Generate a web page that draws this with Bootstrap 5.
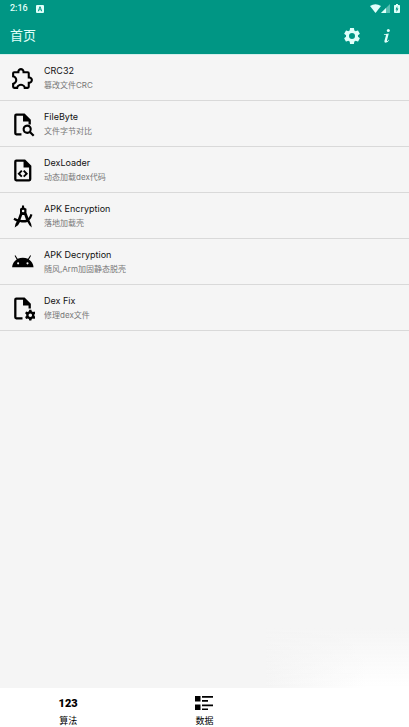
<!DOCTYPE html>
<html lang="zh-CN">
<head>
<meta charset="utf-8">
<meta name="viewport" content="width=device-width, initial-scale=1">
<title>首页</title>
<link href="https://cdn.jsdelivr.net/npm/bootstrap@5.3.0/dist/css/bootstrap.min.css" rel="stylesheet">
<style>
body { font-family: Roboto, "Noto Sans CJK SC", sans-serif; background: #f5f5f5; }
svg { display: block; fill: currentColor; flex: none; }
.app-top { background: #009684; color: #e0fffa; }
.status-line { height: 17px; font-size: 9px; line-height: 17px; font-weight: 500; padding: 0 9px 0 10px; }
.app-head { height: 38px; padding: 0 10px; border-bottom: 1px solid #d5efec; }
.app-head h1 { font-size: 13px; line-height: 20px; font-weight: 400; }
.head-actions { gap: 11px; }
.icon-btn { width: 24px; height: 24px; color: inherit; border: 0; background: none; }
.tool-row { height: 46px; padding: 1px 10px 0; gap: 9px; background: #f5f5f5; color: #000; border: 0; border-bottom: 1px solid #d9d9d9; font-family: Inter, "Noto Sans CJK SC", sans-serif; }
.tool-title { font-size: 9px; line-height: 15px; color: #111; }
.tool-note { font-size: 8px; line-height: 15px; color: #777; }
.tab-bar { position: relative; background: #fff; height: 39px; }
.tab-link { color: #000; font-size: 9px; line-height: 13px; padding-top: 7px; }
.tab-digits { font-size: 11px; line-height: 14px; padding-top: 2px; font-weight: 900; }
.corner-glow { position: absolute; right: 0; bottom: 100%; width: 35%; height: 60px; pointer-events: none;
  background: linear-gradient(to bottom, #f5f5f5, transparent), linear-gradient(to right, #f5f5f5, #fff 70%); }
</style>
<script src="https://cdn.jsdelivr.net/npm/bootstrap@5.3.0/dist/js/bootstrap.bundle.min.js"></script>
</head>
<body class="d-flex flex-column min-vh-100">
<header class="app-top">
  <div class="status-line d-flex align-items-center">
    <span>2:16</span>
    <svg class="ms-2" width="8" height="8" viewBox="0 0 8 8" aria-hidden="true"><path fill-rule="evenodd" d="M1 0h6a1 1 0 0 1 1 1v6a1 1 0 0 1-1 1H1a1 1 0 0 1-1-1V1a1 1 0 0 1 1-1zm2.500 1.500L1.800 6.200h1l.3-1h1.800l.3 1h1L4.500 1.500zM4 2.800l.6 1.600H3.400z"/></svg>
    <svg class="ms-auto" width="11" height="9" viewBox="0 0 11 9" aria-hidden="true"><path d="M0 2Q5.500-1.500 11 2L5.500 9z"/></svg>
    <svg width="9" height="9" viewBox="0 0 9 9" aria-hidden="true"><path opacity=".4" d="M9 0v9H0z"/><path d="M5 4v5H0z"/></svg>
    <svg class="ms-1" width="6" height="9" viewBox="0 0 6 9" aria-hidden="true"><path fill-rule="evenodd" d="M2 0h2v1h1.200q.8 0 .8.800v6.400q0 .8-.8.800H.8q-.8 0-.8-.8V1.800Q0 1 .8 1H2zm1.300 2L1.500 5.500h1V8l2-3.500h-1.200z"/></svg>
  </div>
  <div class="app-head d-flex align-items-center">
    <h1 class="mb-0">首页</h1>
    <div class="head-actions ms-auto d-flex align-items-center">
      <button type="button" class="icon-btn p-0 d-flex align-items-center justify-content-center" aria-label="设置">
        <svg width="20" height="20" viewBox="0 0 24 24"><path d="M19.140 12.940c.04-.3.06-.61.06-.94 0-.32-.02-.64-.07-.94l2.030-1.580c.18-.14.23-.41.12-.61l-1.920-3.320c-.12-.22-.37-.29-.59-.22l-2.390.96c-.5-.38-1.030-.7-1.620-.94l-.36-2.540c-.04-.24-.24-.41-.48-.41h-3.840c-.24 0-.43.17-.47.41l-.36 2.540c-.59.24-1.130.57-1.620.94l-2.390-.96c-.22-.08-.47 0-.59.22L2.740 8.870c-.12.21-.08.47.12.61l2.030 1.580c-.05.3-.09.63-.09.94s.02.64.07.94l-2.030 1.580c-.18.14-.23.41-.12.61l1.920 3.320c.12.22.37.29.59.22l2.390-.96c.5.38 1.030.7 1.620.94l.36 2.540c.05.24.24.41.48.41h3.840c.24 0 .44-.17.47-.41l.36-2.540c.59-.24 1.130-.56 1.620-.94l2.390.96c.22.08.47 0 .59-.22l1.920-3.320c.12-.22.07-.47-.12-.61zM12 15.600a3.600 3.600 0 1 1 0-7.200 3.600 3.600 0 0 1 0 7.200z"/></svg>
      </button>
      <button type="button" class="icon-btn p-0 d-flex align-items-center justify-content-center" aria-label="关于">
        <svg width="8" height="14" viewBox="0 0 8 14"><circle cx="5.300" cy="1.600" r="1.500"/><path d="M1 5.300 5.800 4.500 4 11.300q-.2 1 .5.700.6-.3 1.300-1.300l.5.400Q4.700 13.800 2.700 13.800 1 13.800 1.400 12.100L3 6.200q.1-.5-.6-.4L.9 6z"/></svg>
      </button>
    </div>
  </div>
</header>
<main class="flex-grow-1">
  <div class="list-group list-group-flush">
    <a href="#" class="tool-row list-group-item-action text-decoration-none d-flex align-items-center">
      <svg width="25" height="25" viewBox="0 0 24 24"><path d="M22 13.500C22 15.260 20.700 16.720 19 16.960V20a2 2 0 0 1-2 2h-3.800v-.3a2.700 2.700 0 0 0-2.700-2.700C9 19 7.800 20.210 7.800 21.700v.3H4a2 2 0 0 1-2-2v-3.800h.3C3.790 16.200 5 15 5 13.500S3.790 10.800 2.300 10.800H2V7a2 2 0 0 1 2-2h3.040C7.280 3.300 8.740 2 10.500 2s3.220 1.300 3.460 3H17a2 2 0 0 1 2 2v3.040c1.700.24 3 1.700 3 3.460M17 15h1.500a1.500 1.500 0 0 0 0-3H17V7h-5V5.500a1.500 1.500 0 0 0-3 0V7H4v2.120C5.760 9.800 7 11.500 7 13.500s-1.250 3.700-3 4.380V20h2.120C6.800 18.250 8.500 17 10.500 17s3.700 1.250 4.380 3H17z"/></svg>
      <span><span class="tool-title d-block">CRC32</span><span class="tool-note d-block">篡改文件CRC</span></span>
    </a>
    <a href="#" class="tool-row list-group-item-action text-decoration-none d-flex align-items-center">
      <svg width="25" height="25" viewBox="0 0 24 24"><path d="M6 1.500h8l6 6V12h-2.200V9H12.500V3.700H6.200v16.600H11v2.200H6a2 2 0 0 1-2-2v-17a2 2 0 0 1 2-2z"/><path fill-rule="evenodd" d="M16.500 12a4.500 4.500 0 0 1 3.800 6.900l3.200 3.200-1.500 1.500-3.200-3.200A4.500 4.500 0 1 1 16.500 12zm0 2.100a2.400 2.400 0 1 0 0 4.800 2.400 2.400 0 0 0 0-4.800z"/></svg>
      <span><span class="tool-title d-block">FileByte</span><span class="tool-note d-block">文件字节对比</span></span>
    </a>
    <a href="#" class="tool-row list-group-item-action text-decoration-none d-flex align-items-center">
      <svg width="25" height="25" viewBox="0 0 24 24"><path fill-rule="evenodd" d="M6 1.500h8.500l6 6v13a2 2 0 0 1-2 2H6a2 2 0 0 1-2-2v-17a2 2 0 0 1 2-2zm.2 2.200v16.600h12.100V9H13V3.700z"/><path d="m10.700 11.500 1.300 1.200-2.200 2.300 2.200 2.300-1.300 1.200L7.200 15zm3.100 0L12.500 12.700l2.200 2.300-2.200 2.300 1.300 1.200 3.500-3.500z"/></svg>
      <span><span class="tool-title d-block">DexLoader</span><span class="tool-note d-block">动态加载dex代码</span></span>
    </a>
    <a href="#" class="tool-row list-group-item-action text-decoration-none d-flex align-items-center">
      <svg width="25" height="25" viewBox="0 0 24 24"><path fill-rule="evenodd" d="M11.500 1.500h2V3.300l2.300 1.200v4l1.900 5q1.100-1.300 1.900-3.900l2 .6q-1 3.400-3 5.400l1.700 3.700.6 3.200-2.300-2-1.800-3.300q-3.700 1.300-7.200.1l-1.900 3.200L4.500 22.500l.8-3.500 1.200-2.300L3.300 15l1-1.900 3.200 1.500 2.100-5.700V4.500l1.900-1.200zM12.600 5.400a1.200 1.200 0 1 0 0 2.400 1.200 1.200 0 0 0 0-2.400zm-.9 5.200-1.700 4.400q2.600.8 5.400 0l-1.700-4.400z"/></svg>
      <span><span class="tool-title d-block">APK Encryption</span><span class="tool-note d-block">落地加载壳</span></span>
    </a>
    <a href="#" class="tool-row list-group-item-action text-decoration-none d-flex align-items-center">
      <svg width="25" height="25" viewBox="0 0 24 24"><path fill-rule="evenodd" d="M5.200 5 7.300 8.500Q12.300 6.200 17.300 8.500L19.400 5l.8.400-2 3.600q3.900 2.400 4.400 7.500H2q.5-5.100 4.400-7.500l-2-3.600zM7.800 11.800a1 1 0 1 0 0 2 1 1 0 0 0 0-2zm9 0a1 1 0 1 0 0 2 1 1 0 0 0 0-2z"/></svg>
      <span><span class="tool-title d-block">APK Decryption</span><span class="tool-note d-block">随风,Arm加固静态脱壳</span></span>
    </a>
    <a href="#" class="tool-row list-group-item-action text-decoration-none d-flex align-items-center">
      <svg width="25" height="25" viewBox="0 0 24 24"><path d="M6 1.500h8l6 6V12h-2.200V9H12.500V3.700H6.200v16.600H12v2.200H6a2 2 0 0 1-2-2v-17a2 2 0 0 1 2-2z"/><path fill-rule="evenodd" d="M18.500 13.200h2l.4 1.500 1.100.6 1.500-.5 1 1.800-1.100 1.100v1.400l1.100 1.100-1 1.800-1.500-.5-1.100.6-.4 1.500h-2l-.4-1.500-1.100-.6-1.500.5-1-1.800 1.100-1.100v-1.400l-1.100-1.100 1-1.800 1.500.5 1.100-.6zm1 3.500a1.700 1.700 0 1 0 0 3.400 1.700 1.700 0 0 0 0-3.400z"/></svg>
      <span><span class="tool-title d-block">Dex Fix</span><span class="tool-note d-block">修理dex文件</span></span>
    </a>
  </div>
</main>
<nav class="tab-bar row g-0" aria-label="主导航">
  <div class="corner-glow"></div>
  <a href="#" class="tab-link col-4 text-decoration-none d-flex flex-column align-items-center gap-1">
    <span class="tab-digits">123</span>
    <span>算法</span>
  </a>
  <a href="#" class="tab-link col-4 text-decoration-none d-flex flex-column align-items-center gap-1">
    <svg width="18" height="16" viewBox="0 0 18 16" aria-hidden="true"><path d="M0 1h5.500v5.500H0zM0 9.500h5.500V15H0zM7 1h11v1.700H7zM7 5h6v1.700H7zM7 9.500h11v1.700H7zM7 13.400h6V15H7z"/></svg>
    <span>数据</span>
  </a>
</nav>
</body>
</html>
